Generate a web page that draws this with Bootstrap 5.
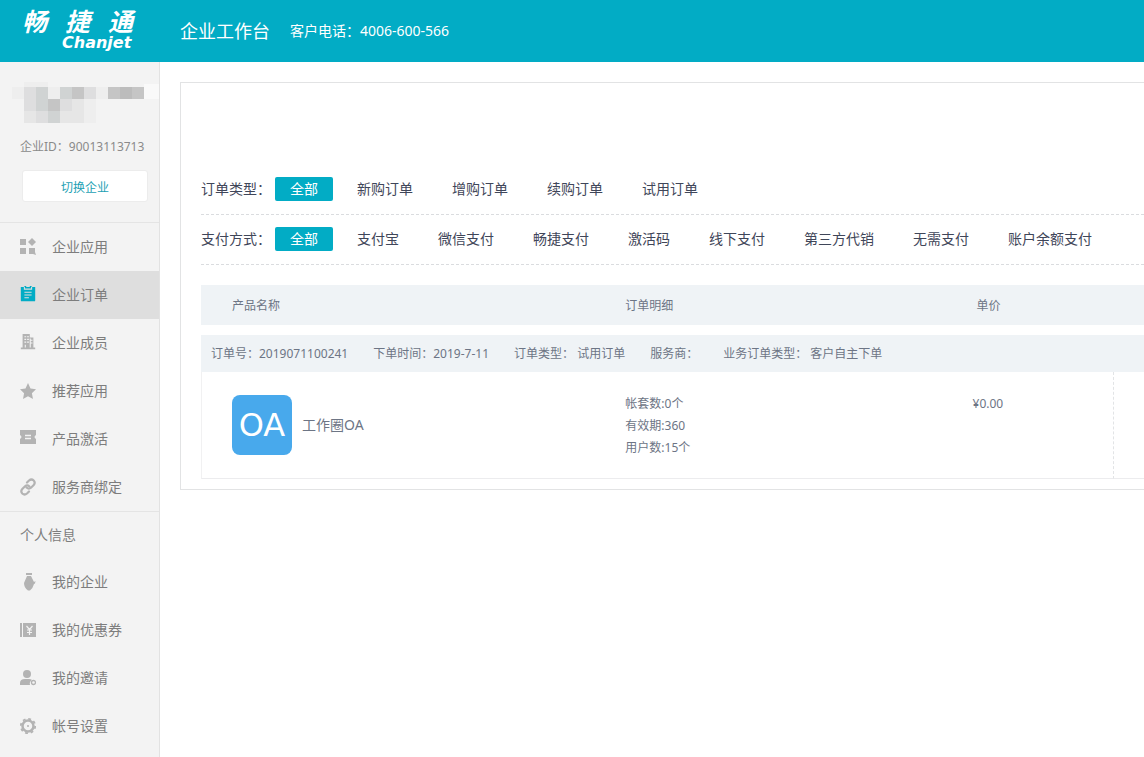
<!DOCTYPE html>
<html lang="zh-CN">
<head>
<meta charset="utf-8">
<meta name="viewport" content="width=device-width, initial-scale=1">
<title>企业工作台</title>
<link href="https://cdn.jsdelivr.net/npm/bootstrap@5.3.0/dist/css/bootstrap.min.css" rel="stylesheet">
<style>
  :root { --brand: #02acc5; --band: #eff3f6; }
  body { font-family: "Noto Sans", "Noto Sans CJK SC", sans-serif; font-size: 14px; line-height: 20px; color: #464c5b; background: #fff; overflow-x: hidden; }
  a { text-decoration: none; color: inherit; }
  .topbar { background: var(--brand); color: #fff; height: 62px; }
  .brand-logo { width: 180px; padding-left: 22px; padding-top: 10px; }
  .brand-zh { font: italic 700 25px/25px "Liberation Sans", "Noto Sans CJK SC", sans-serif; gap: 18px; }
  .brand-en { font: italic 700 16px/16px "DejaVu Sans", sans-serif; padding-left: 40px; }
  .site-title { font-size: 18px; line-height: 24px; font-weight: 400; }
  .sidebar { width: 160px; background: #f3f3f3; border-right: 1px solid #e2e2e2; color: #7d7d7d; min-height: calc(100vh - 62px); }
  .account { height: 161px; padding-top: 20px; border-bottom: 1px solid #e4e4e4; }
  .account-id { font-size: 12px; margin: 13px 0 13px 20px; white-space: nowrap; color: #8a8a8a; }
  .switch-btn { width: 126px; height: 32px; margin-left: 22px; padding: 3px 0 0; font-size: 12px; background: #fff; border: 1px solid #ececec; color: #1d9fb4; border-radius: 3px; }
  .switch-btn:hover { background: #fafafa; color: var(--brand); border-color: var(--brand); }
  .side-link { height: 48px; padding: 0 0 0 20px; gap: 16px; color: #7d7d7d; white-space: nowrap; }
  .side-link:hover { background: #ebebeb; color: #666; }
  .side-link.active { background: #dedede; }
  .side-link svg { width: 16px; height: 18px; color: #b3b3b3; flex: none; }
  .side-link.active svg { color: var(--brand); }
  .side-title { border-top: 1px solid #e4e4e4; height: 47px; padding-left: 20px; font-size: 14px; font-weight: 400; }
  .main-area { padding: 20px 0 20px 20px; min-width: 0; }
  .panel { border: 1px solid #e2e3e4; border-right: 0; padding: 82px 0 10px 20px; }
  .filter-row { height: 50px; padding-bottom: 2px; border-bottom: 1px dashed #dadcdf; white-space: nowrap; overflow: hidden; color: #3f4659; }
  .filter-label { width: 74px; flex: none; }
  .filter-items { gap: 9px; }
  .filter-link { height: 24px; line-height: 24px; padding: 0 15px; border-radius: 2px; }
  .filter-link.active { background: var(--brand); color: #fff; }
  .order-table { table-layout: fixed; border-collapse: separate; border-spacing: 0; margin-top: 20px; font-size: 12px; line-height: 22px; color: #6d7585; width: 100%; }
  .order-table th { font-weight: 400; }
  .head-row th { background: var(--band); height: 40px; padding: 2px 0 0; }
  .head-row th:first-child { padding-left: 31px; }
  .gap-row td { height: 10px; padding: 0; }
  .meta-row td { background: var(--band); height: 37px; padding: 0 10px; }
  .meta-list { gap: 25px; white-space: nowrap; }
  .item-row td { height: 107px; padding: 21px 0 0; border-bottom: 1px solid #ececee; vertical-align: top; }
  .item-row td:first-child { border-left: 1px solid #f1f1f2; padding: 23px 0 0 30px; }
  .item-row td.price-cell { border-right: 1px dashed #e2e4e6; }
  .col-name { width: 45%; } .col-detail { width: 25.2%; } .col-price { width: 26.6%; }
  .app-icon { width: 60px; height: 60px; border-radius: 8px; background: #48a9ec; color: #fff; font: 32px/60px "DejaVu Sans", sans-serif; text-align: center; }
  .app-name { font-size: 14px; margin-left: 10px; }
</style>
</head>
<body>
<header class="topbar d-flex">
  <a class="brand-logo d-block flex-shrink-0" href="#">
    <div class="brand-zh d-flex"><span>畅</span><span>捷</span><span>通</span></div>
    <div class="brand-en">Chanjet</div>
  </a>
  <div class="d-flex align-items-center text-nowrap">
    <h1 class="site-title mb-0">企业工作台</h1>
    <span class="ms-3 ps-1">客户电话：4006-600-566</span>
  </div>
</header>

<div class="d-flex">
  <aside class="sidebar flex-shrink-0">
    <div class="account">
      <svg class="d-block" width="159" height="42" viewBox="0 0 159 42" shape-rendering="crispEdges" aria-hidden="true">
        <path fill="#eeeeee" d="M12 5h12v12H12zM48 5h12v12H48zM96 5h12v12H96zM84 17h12v24H84zM24 0h24v5H24z"/>
        <path fill="#f9f9f9" d="M144 2h15v15h-15z"/>
        <path fill="#dededf" d="M24 5h12v12H24zM84 5h12v12H84zM24 17h12v12H24zM60 17h12v12H60zM36 29h12v12H36z"/>
        <path fill="#d0d3d3" d="M36 5h12v12H36zM60 5h12v12H60zM36 17h12v12H36zM48 29h12v12H48z"/>
        <path fill="#c5c5c5" d="M72 5h12v12H72zM108 5h12v12h-12zM132 5h12v12h-12zM48 17h12v12H48z"/>
        <path fill="#bcbcbc" d="M120 5h12v12h-12z"/>
        <path fill="#e6e6e6" d="M72 17h12v12H72zM24 29h12v12H24zM60 29h24v12H60z"/>
      </svg>
      <div class="account-id">企业ID：90013113713</div>
      <button type="button" class="btn switch-btn d-block">切换企业</button>
    </div>
    <nav class="nav flex-column flex-nowrap">
      <a class="side-link d-flex align-items-center" href="#"><svg viewBox="0 0 16 18" fill="currentColor"><path d="M0 1h6v6H0zM0 10h6v6H0zM9 10h6v4l1 3-3-1H9zM12 0l4 4-4 4-4-4z"/></svg>企业应用</a>
      <a class="side-link active d-flex align-items-center" href="#" aria-current="page"><svg viewBox="0 0 16 20"><path fill="currentColor" d="M0 1h4V0h2v1h4V0h2v1h4v15q0 1-1 1H1q-1 0-1-1z"/><path d="M4 1v2.500h8V1M4 7h8M4 10h8M4 13h5" fill="none" stroke="#dedede" stroke-width="1.200"/></svg>企业订单</a>
      <a class="side-link d-flex align-items-center" href="#"><svg viewBox="0 0 16 20"><path fill="currentColor" d="M2 0h8v4h4v11h2v2H0v-2h2z"/><path d="M4 3h2M7 3h2M4 6h2M7 6h2M4 9h2M7 9h2M11 7h2M11 10h2M5 12v3M10.500 5v10" stroke="#f3f3f3" stroke-width="1.200"/></svg>企业成员</a>
      <a class="side-link d-flex align-items-center" href="#"><svg viewBox="0 0 16 18" fill="currentColor"><path d="M8 1l2.500 5.500 5.500.700-4.100 4 1.100 5.800L8 14.200 3 17l1.100-5.800L0 7.200l5.500-.700z"/></svg>推荐应用</a>
      <a class="side-link d-flex align-items-center" href="#"><svg viewBox="0 0 16 18"><path fill="currentColor" d="M0 0h16v5q-3 2 0 4v5H0V9q3-2 0-4z"/><path d="M5 5.500h6M5 8.500h6" stroke="#f3f3f3" stroke-width="1.300"/></svg>产品激活</a>
      <a class="side-link d-flex align-items-center" href="#"><svg viewBox="0 0 16 18" fill="none" stroke="currentColor" stroke-width="2.200" stroke-linecap="round"><path d="M7 4.500l2-2q2.500-2 4.700 0 2 2.200 0 4.500l-2.700 2.700q-2.200 1.800-4.500-.200"/><path d="M9 13.500l-2 2q-2.500 2-4.700 0-2-2.200 0-4.500L5 8.300q2.200-1.800 4.500.200"/></svg>服务商绑定</a>
    </nav>
    <h2 class="side-title d-flex align-items-center mb-0">个人信息</h2>
    <nav class="nav flex-column flex-nowrap">
      <a class="side-link d-flex align-items-center" href="#"><svg viewBox="0 0 16 18" fill="currentColor"><path d="M6 0h6v2H6zM7 3h4l3 6 1.500-1-.500 2.500-1 .500q-1 4-4 6.500H8Q4 15 4 10z"/></svg>我的企业</a>
      <a class="side-link d-flex align-items-center" href="#"><svg viewBox="0 0 16 18"><path fill="currentColor" d="M0 2h2v14H0zM3 2h13v14H3z"/><path d="M6.500 5l3 3.500 3-3.500M9.500 8.500V14M7 9h5M7 11.500h5" fill="none" stroke="#f3f3f3" stroke-width="1.200"/></svg>我的优惠券</a>
      <a class="side-link d-flex align-items-center" href="#"><svg viewBox="0 0 16 18"><circle cx="7" cy="5" r="4" fill="currentColor"/><path fill="currentColor" d="M0 16v-2q0-4 5-4h4q2 0 3 1-3 2-2 5z"/><circle cx="13.500" cy="13.500" r="2" fill="none" stroke="currentColor" stroke-width="1.300"/></svg>我的邀请</a>
      <a class="side-link d-flex align-items-center" href="#"><svg viewBox="0 0 16 18" fill="none" stroke="currentColor"><circle cx="8" cy="9" r="5.500" stroke-width="2.500"/><circle cx="8" cy="9" r="7.200" stroke-width="1.800" stroke-dasharray="2.830 2.830"/><circle cx="8" cy="9" r="1" fill="currentColor" stroke="none"/></svg>帐号设置</a>
    </nav>
  </aside>

  <main class="main-area flex-grow-1">
    <section class="panel">
      <div class="filter-row d-flex align-items-center">
        <span class="filter-label">订单类型：</span>
        <div class="filter-items d-flex">
          <a class="filter-link active" href="#">全部</a>
          <a class="filter-link" href="#">新购订单</a>
          <a class="filter-link" href="#">增购订单</a>
          <a class="filter-link" href="#">续购订单</a>
          <a class="filter-link" href="#">试用订单</a>
        </div>
      </div>
      <div class="filter-row d-flex align-items-center">
        <span class="filter-label">支付方式：</span>
        <div class="filter-items d-flex">
          <a class="filter-link active" href="#">全部</a>
          <a class="filter-link" href="#">支付宝</a>
          <a class="filter-link" href="#">微信支付</a>
          <a class="filter-link" href="#">畅捷支付</a>
          <a class="filter-link" href="#">激活码</a>
          <a class="filter-link" href="#">线下支付</a>
          <a class="filter-link" href="#">第三方代销</a>
          <a class="filter-link" href="#">无需支付</a>
          <a class="filter-link" href="#">账户余额支付</a>
        </div>
      </div>

      <table class="order-table">
        <colgroup><col class="col-name"><col class="col-detail"><col class="col-price"><col></colgroup>
        <thead>
          <tr class="head-row">
            <th scope="col">产品名称</th>
            <th scope="col">订单明细</th>
            <th scope="col" class="text-center">单价</th>
            <th></th>
          </tr>
        </thead>
        <tbody>
          <tr class="gap-row"><td colspan="4"></td></tr>
          <tr class="meta-row">
            <td colspan="4">
              <div class="meta-list d-flex">
                <span>订单号：2019071100241</span>
                <span>下单时间：2019-7-11</span>
                <span>订单类型： 试用订单</span>
                <span>服务商：</span>
                <span>业务订单类型： 客户自主下单</span>
              </div>
            </td>
          </tr>
          <tr class="item-row">
            <td>
              <div class="d-flex align-items-center">
                <div class="app-icon flex-shrink-0">OA</div>
                <a class="app-name" href="#">工作圈OA</a>
              </div>
            </td>
            <td>
              <div>帐套数:0个</div>
              <div>有效期:360</div>
              <div>用户数:15个</div>
            </td>
            <td class="price-cell text-center">¥0.00</td>
            <td></td>
          </tr>
        </tbody>
      </table>
    </section>
  </main>
</div>
<script src="https://cdn.jsdelivr.net/npm/bootstrap@5.3.0/dist/js/bootstrap.bundle.min.js"></script>
</body>
</html>
